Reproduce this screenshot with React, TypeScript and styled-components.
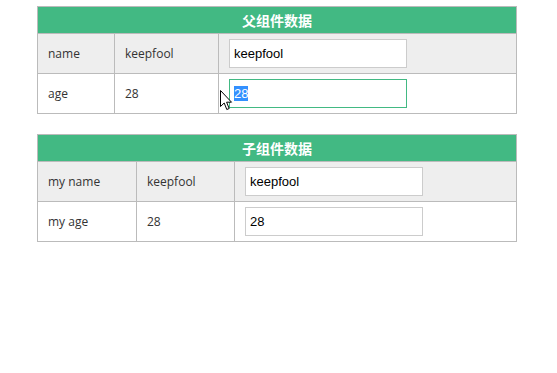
import { useEffect, useRef } from 'react';
import { styled, createGlobalStyle } from 'styled-components';

const GlobalStyle = createGlobalStyle`
  html, body {
    margin: 0;
    padding: 0;
    background: #fff;
  }
  body {
    font-family: 'Open Sans', 'Noto Sans CJK SC', sans-serif;
    color: #333;
  }
  input::selection {
    background: #3390ff;
    color: #fff;
  }
`;

type Row = { label: string; value: string };

const DataTable = ({
  title,
  rows,
  widths,
  focusIndex,
}: {
  title: string;
  rows: Row[];
  widths: number[];
  focusIndex?: number;
}) => {
  const inputRef = useRef<HTMLInputElement>(null);

  useEffect(() => {
    if (inputRef.current) {
      inputRef.current.focus();
      inputRef.current.select();
    }
  }, []);

  return (
    <Table>
      <colgroup>
        {widths.map((w, i) => (
          <col key={i} style={{ width: w }} />
        ))}
        <col />
      </colgroup>
      <thead>
        <tr>
          <HeadCell colSpan={3}>{title}</HeadCell>
        </tr>
      </thead>
      <tbody>
        {rows.map((row, i) => (
          <BodyRow key={row.label} $striped={i % 2 === 0}>
            <Cell>{row.label}</Cell>
            <Cell>{row.value}</Cell>
            <Cell>
              <TextInput
                type="text"
                defaultValue={row.value}
                ref={i === focusIndex ? inputRef : undefined}
                $active={i === focusIndex}
              />
            </Cell>
          </BodyRow>
        ))}
      </tbody>
    </Table>
  );
};

const Pointer = () => (
  <Cursor width="13" height="21" viewBox="0 0 13 21">
    <path
      d="M0.5 0.5 L0.5 16.5 L4.2 13 L6.8 19.5 L9.2 18.5 L6.6 12.2 L11.5 12.2 Z"
      fill="#fff"
      stroke="#000"
      strokeWidth="1"
      strokeLinejoin="round"
    />
  </Cursor>
);

export default function App() {
  return (
    <>
      <GlobalStyle />
      <Page>
        <DataTable
          title="父组件数据"
          widths={[77, 104]}
          focusIndex={1}
          rows={[
            { label: 'name', value: 'keepfool' },
            { label: 'age', value: '28' },
          ]}
        />
        <DataTable
          title="子组件数据"
          widths={[99, 98]}
          rows={[
            { label: 'my name', value: 'keepfool' },
            { label: 'my age', value: '28' },
          ]}
        />
        <Pointer />
      </Page>
    </>
  );
}

const Page = styled.div`
  position: relative;
  display: flex;
  flex-direction: column;
  gap: 20px;
  width: 480px;
  padding: 6px 0 0 37px;
`;

const Table = styled.table`
  width: 480px;
  border-collapse: collapse;
  table-layout: fixed;
  border: 1px solid #bbb;
  font-size: 12px;
`;

const HeadCell = styled.th`
  height: 26px;
  padding: 0;
  background: #42b983;
  color: #fff;
  font-size: 14px;
  font-weight: bold;
  text-align: center;
  border: 1px solid #bbb;
`;

const BodyRow = styled.tr<{ $striped: boolean }>`
  background: ${(p) => (p.$striped ? '#eee' : '#fff')};
`;

const Cell = styled.td`
  height: 39px;
  padding: 0 10px;
  border: 1px solid #bbb;
  text-align: left;
  vertical-align: middle;
`;

const TextInput = styled.input<{ $active: boolean }>`
  display: block;
  box-sizing: border-box;
  width: 178px;
  height: 29px;
  padding: 0 4px;
  margin: 0;
  border: 1px solid ${(p) => (p.$active ? '#42b983' : '#ccc')};
  outline: none;
  background: #fff;
  font-family: 'Liberation Sans', Arial, sans-serif;
  font-size: 13px;
  color: #000;
`;

const Cursor = styled.svg`
  position: absolute;
  left: 220px;
  top: 90px;
`;
